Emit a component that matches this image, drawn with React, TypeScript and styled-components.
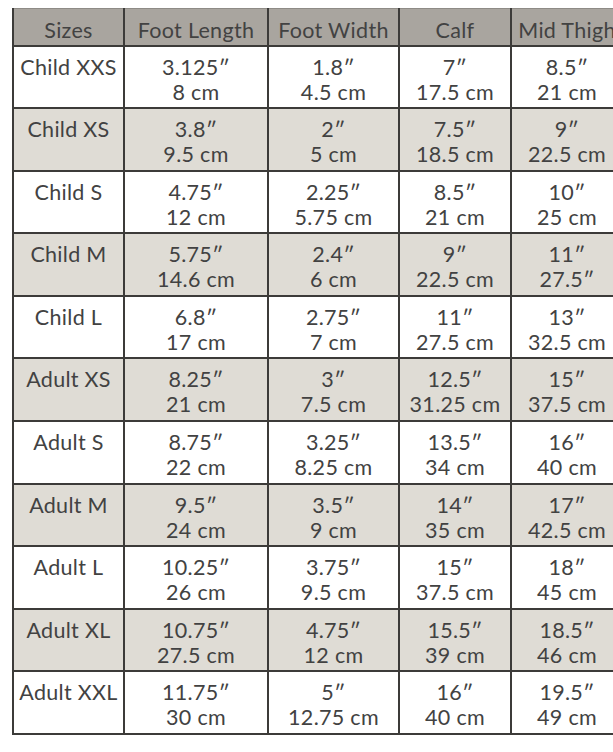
import React from 'react';
import styled, { createGlobalStyle } from 'styled-components';

const GlobalStyle = createGlobalStyle`
  html, body {
    margin: 0;
    padding: 0;
    background: #ffffff;
  }
  body {
    font-family: Lato, "Open Sans", "DejaVu Sans", sans-serif;
    color: #333333;
  }
`;

// Page frame: the chart runs wider than the window and is cut off on the right
const Page = styled.div`
  width: 613px;
  height: 752px;
  overflow: hidden;
  padding: 8px 0 0 12px;
  box-sizing: border-box;
`;

const Table = styled.table`
  border-collapse: collapse;
  table-layout: fixed;
  width: 610px;
  font-size: 21.5px;
  font-weight: 400;
  letter-spacing: 0.3px;
  color: #424242;
`;

const HeadCell = styled.th`
  background: #a9a59f;
  font-weight: 400;
  height: 37px;
  box-sizing: border-box;
  padding: 6px 0 0;
  text-align: center;
  vertical-align: middle;
  line-height: 28px;
  border: 2px solid #3c3b39;
  border-top: 1px solid #8e8b86;
  white-space: nowrap;
`;

const Row = styled.tr<{ $striped: boolean }>`
  background: ${p => (p.$striped ? '#dfdcd5' : '#ffffff')};
`;

const Cell = styled.td`
  height: 62.6px;
  box-sizing: border-box;
  padding: 8px 0 0;
  text-align: center;
  vertical-align: top;
  line-height: 25px;
  border: 2px solid #3c3b39;
  white-space: nowrap;
`;

const Line = styled.div`
  display: block;
`;

const columns = ['Sizes', 'Foot Length', 'Foot Width', 'Calf', 'Mid Thigh'];
const widths = [111, 144, 131, 112, 112];

type Measure = [string, string];

const rows: { size: string; values: Measure[] }[] = [
  { size: 'Child XXS', values: [['3.125″', '8 cm'], ['1.8″', '4.5 cm'], ['7″', '17.5 cm'], ['8.5″', '21 cm']] },
  { size: 'Child XS', values: [['3.8″', '9.5 cm'], ['2″', '5 cm'], ['7.5″', '18.5 cm'], ['9″', '22.5 cm']] },
  { size: 'Child S', values: [['4.75″', '12 cm'], ['2.25″', '5.75 cm'], ['8.5″', '21 cm'], ['10″', '25 cm']] },
  { size: 'Child M', values: [['5.75″', '14.6 cm'], ['2.4″', '6 cm'], ['9″', '22.5 cm'], ['11″', '27.5″']] },
  { size: 'Child L', values: [['6.8″', '17 cm'], ['2.75″', '7 cm'], ['11″', '27.5 cm'], ['13″', '32.5 cm']] },
  { size: 'Adult XS', values: [['8.25″', '21 cm'], ['3″', '7.5 cm'], ['12.5″', '31.25 cm'], ['15″', '37.5 cm']] },
  { size: 'Adult S', values: [['8.75″', '22 cm'], ['3.25″', '8.25 cm'], ['13.5″', '34 cm'], ['16″', '40 cm']] },
  { size: 'Adult M', values: [['9.5″', '24 cm'], ['3.5″', '9 cm'], ['14″', '35 cm'], ['17″', '42.5 cm']] },
  { size: 'Adult L', values: [['10.25″', '26 cm'], ['3.75″', '9.5 cm'], ['15″', '37.5 cm'], ['18″', '45 cm']] },
  { size: 'Adult XL', values: [['10.75″', '27.5 cm'], ['4.75″', '12 cm'], ['15.5″', '39 cm'], ['18.5″', '46 cm']] },
  { size: 'Adult XXL', values: [['11.75″', '30 cm'], ['5″', '12.75 cm'], ['16″', '40 cm'], ['19.5″', '49 cm']] },
];

const App: React.FC = () => (
  <>
    <GlobalStyle />
    <Page>
      <Table>
        <colgroup>
          {widths.map((w, i) => (
            <col key={i} style={{ width: w }} />
          ))}
        </colgroup>
        <thead>
          <tr>
            {columns.map(c => (
              <HeadCell key={c}>{c}</HeadCell>
            ))}
          </tr>
        </thead>
        <tbody>
          {rows.map((r, i) => (
            <Row key={r.size} $striped={i % 2 === 1}>
              <Cell>{r.size}</Cell>
              {r.values.map(([inch, cm], j) => (
                <Cell key={j}>
                  <Line>{inch}</Line>
                  <Line>{cm}</Line>
                </Cell>
              ))}
            </Row>
          ))}
        </tbody>
      </Table>
    </Page>
  </>
);

export default App;
